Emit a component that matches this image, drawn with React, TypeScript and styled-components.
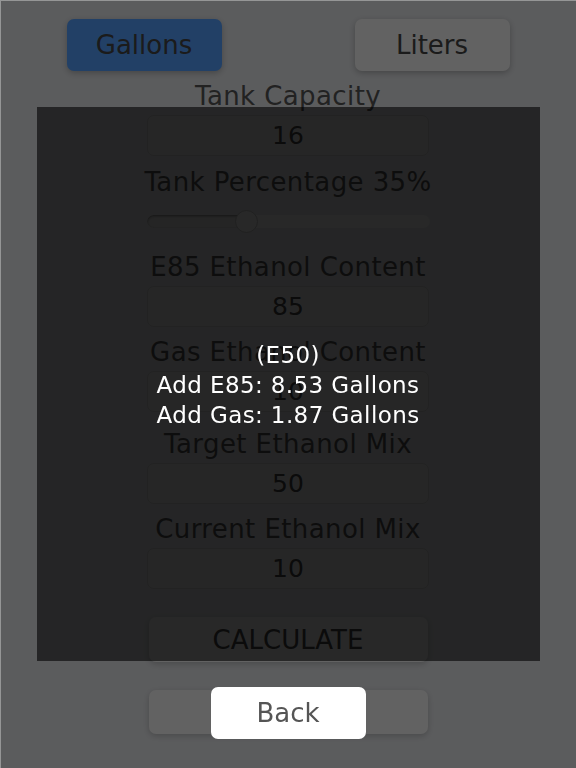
import React from "react";
import styled, { createGlobalStyle } from "styled-components";

const GlobalStyle = createGlobalStyle`
    html, body {
        margin: 0;
        padding: 0;
        background: #e4e6e9;
    }
    body {
        font-family: "DejaVu Sans", "Liberation Sans", sans-serif;
        width: 576px;
        height: 768px;
        overflow: hidden;
    }
`;

const Page = styled.div`
    width: 576px;
    height: 768px;
    padding-top: 19px;
    box-sizing: border-box;
    display: flex;
    flex-direction: column;
    align-items: center;
    color: #555;
`;

const UnitRow = styled.div`
    width: 100%;
    display: grid;
    grid-template-columns: 1fr 1fr;
    justify-items: center;
`;

const UnitButton = styled.button<{ $active?: boolean }>`
    width: 155px;
    height: 52px;
    border: none;
    border-radius: 7px;
    background: ${p => (p.$active ? "#55a0ff" : "#f5f5f5")};
    color: #444;
    font-family: inherit;
    font-size: 26px;
    box-shadow: 0 2px 6px rgba(0, 0, 0, 0.25);
`;

const Label = styled.div<{ $top: number }>`
    margin-top: ${p => p.$top}px;
    height: 30px;
    line-height: 30px;
    font-size: 26px;
    letter-spacing: 0.4px;
    white-space: nowrap;
`;

const Input = styled.div`
    margin-top: 4px;
    width: 282px;
    height: 41px;
    box-sizing: border-box;
    border: 1px solid #d0d0d0;
    border-radius: 7px;
    background: #ededed;
    display: flex;
    align-items: center;
    justify-content: center;
    font-size: 25px;
    color: #444;
`;

const Slider = styled.div`
    margin-top: 13px;
    width: 283px;
    height: 23px;
    position: relative;
    display: flex;
    align-items: center;
`;

const Track = styled.div`
    width: 100%;
    height: 13px;
    border-radius: 7px;
    background: #f4f4f4;
    overflow: hidden;
`;

const Fill = styled.div`
    height: 100%;
    border-radius: 7px;
    background: #e6e6e6;
    box-shadow: inset 0 1px 3px rgba(0, 0, 0, 0.45);
`;

const Thumb = styled.div`
    position: absolute;
    top: 0;
    width: 23px;
    height: 23px;
    margin-left: -11px;
    border-radius: 50%;
    background: #f6f6f6;
    border: 1px solid #c4c4c4;
    box-sizing: border-box;
`;

const WideButton = styled.button<{ $top: number; $height: number }>`
    margin-top: ${p => p.$top}px;
    width: 279px;
    height: ${p => p.$height}px;
    border: none;
    border-radius: 7px;
    background: #f5f5f5;
    color: #444;
    font-family: inherit;
    font-size: 26px;
    box-shadow: 0 2px 6px rgba(0, 0, 0, 0.2);
`;

const Overlay = styled.div`
    position: fixed;
    inset: 0;
    background: rgba(0, 0, 0, 0.6);
    box-shadow: inset 1px 1px 0 rgba(255, 255, 255, 0.35);
    display: flex;
    flex-direction: column;
    align-items: center;
    padding-top: 107px;
    box-sizing: border-box;
`;

const ResultBox = styled.div`
    width: 503px;
    height: 554px;
    background: rgba(0, 0, 0, 0.6);
    display: flex;
    flex-direction: column;
    align-items: center;
    justify-content: center;
    padding-top: 2px;
    box-sizing: border-box;
    color: #fff;
    font-size: 23px;
    line-height: 30px;
    letter-spacing: 0.4px;
`;

const BackButton = styled.button`
    margin-top: 26px;
    width: 155px;
    height: 52px;
    border: none;
    border-radius: 7px;
    background: #fff;
    color: #555;
    font-family: inherit;
    font-size: 26px;
`;

const fields = [
    { label: "E85 Ethanol Content", value: "85", top: 19 },
    { label: "Gas Ethanol Content", value: "10", top: 10 },
    { label: "Target Ethanol Mix", value: "50", top: 17 },
    { label: "Current Ethanol Mix", value: "10", top: 10 },
];

export default function App() {
    const percent = 35;
    return <>
        <GlobalStyle />
        <Page>
            <UnitRow>
                <UnitButton $active>Gallons</UnitButton>
                <UnitButton>Liters</UnitButton>
            </UnitRow>
            <Label $top={10}>Tank Capacity</Label>
            <Input>16</Input>
            <Label $top={11}>Tank Percentage {percent}%</Label>
            <Slider>
                <Track>
                    <Fill style={{ width: `${percent}%` }} />
                </Track>
                <Thumb style={{ left: `${percent}%` }} />
            </Slider>
            {fields.map(f =>
                <React.Fragment key={f.label}>
                    <Label $top={f.top}>{f.label}</Label>
                    <Input>{f.value}</Input>
                </React.Fragment>
            )}
            <WideButton $top={28} $height={45}>CALCULATE</WideButton>
            <WideButton $top={28} $height={44}>Back</WideButton>
        </Page>
        <Overlay>
            <ResultBox>
                <div>(E50)</div>
                <div>Add E85: 8.53 Gallons</div>
                <div>Add Gas: 1.87 Gallons</div>
            </ResultBox>
            <BackButton>Back</BackButton>
        </Overlay>
    </>;
}
